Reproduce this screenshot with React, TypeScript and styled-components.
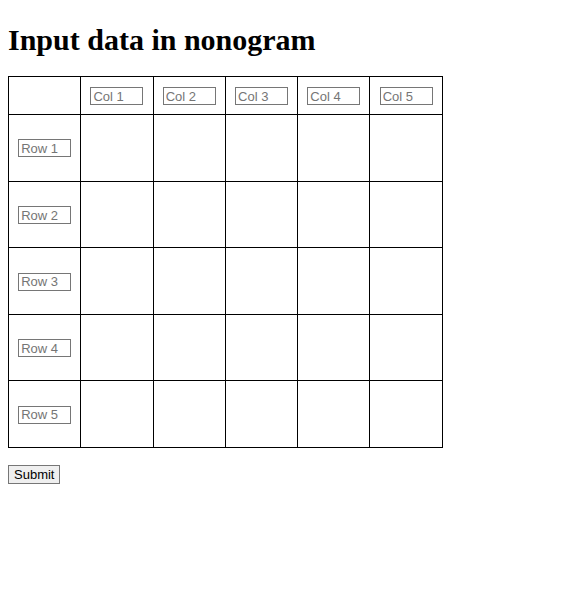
import React from "react";
import styled, { createGlobalStyle } from "styled-components";

const Global = createGlobalStyle`
  html, body { margin: 0; padding: 0; background: #fff; }
  body { padding: 8px; font-family: "Liberation Serif", serif; color: #000; }
`;

const Title = styled.h1`
  font-family: "Liberation Serif", serif;
  font-size: 30px;
  font-weight: bold;
  line-height: 36px;
  margin: 14px 0 18px;
`;

const Grid = styled.table`
  border-collapse: collapse;
  border-spacing: 0;
`;

const Cell = styled.td<{ $head?: boolean }>`
  border: 1px solid #000;
  width: 72.3px;
  height: ${(p) => (p.$head ? "38px" : "66.6px")};
  padding: 0;
  text-align: center;
  vertical-align: middle;
  box-sizing: border-box;
`;

const Field = styled.input`
  box-sizing: border-box;
  width: 53px;
  height: 18px;
  padding: 0 2px;
  border: 1px solid #767676;
  border-radius: 0;
  font-family: "Liberation Sans", Arial, sans-serif;
  font-size: 13px;
  color: #000;
  vertical-align: middle;
  &::placeholder { color: #757575; }
`;

const SubmitButton = styled.button`
  margin-top: 17px;
  box-sizing: border-box;
  height: 19px;
  padding: 0 5px;
  font-family: "Liberation Sans", Arial, sans-serif;
  font-size: 13px;
  color: #000;
  background: #efefef;
  border: 1px solid #767676;
  border-radius: 0;
  display: block;
`;

const cols = [1, 2, 3, 4, 5];

export default function App() {
  return (
    <>
      <Global />
      <Title>Input data in nonogram</Title>
      <Grid>
        <tbody>
          <tr>
            <Cell $head />
            {cols.map((c) => (
              <Cell $head key={c}>
                <Field placeholder={`Col ${c}`} />
              </Cell>
            ))}
          </tr>
          {cols.map((r) => (
            <tr key={r}>
              <Cell>
                <Field placeholder={`Row ${r}`} />
              </Cell>
              {cols.map((c) => (
                <Cell key={c} />
              ))}
            </tr>
          ))}
        </tbody>
      </Grid>
      <SubmitButton>Submit</SubmitButton>
    </>
  );
}
